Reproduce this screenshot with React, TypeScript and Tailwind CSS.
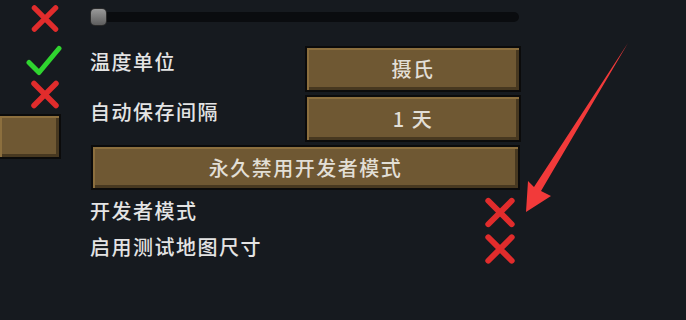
const font = { fontFamily: '"Noto Sans CJK SC", "Noto Sans", sans-serif' };

function RedX({ className = '' }: { className?: string }) {
  return (
    <svg viewBox="0 0 30 28" className={className} fill="none">
      <path d="M4 3 L26 25 M26 3 L4 25" stroke="#e12c2c" strokeWidth="5.5" strokeLinecap="round" />
    </svg>
  );
}

function Check({ className = '' }: { className?: string }) {
  return (
    <svg viewBox="0 0 36 30" className={className} fill="none">
      <path d="M3 17 L13 27 L33 3" stroke="#2fd42f" strokeWidth="5" strokeLinecap="round" strokeLinejoin="round" />
    </svg>
  );
}

function WoodButton({ label, className = '' }: { label?: string; className?: string }) {
  return (
    <div
      className={`flex items-center justify-center border-2 border-[#0b0b0b] bg-[#6f5833] text-[20px] font-medium tracking-[1.5px] text-[#e2dfd6] shadow-[inset_2px_2px_0_#8c6f3e,inset_-3px_-3px_0_#473820] ${className}`}
    >
      {label}
    </div>
  );
}

export default function App() {
  return (
    <div className="relative flex h-[320px] w-[686px] overflow-hidden bg-[#161a1f]" style={font}>
      <div className="flex w-[61px] flex-col pt-[5px]">
        <RedX className="ml-[30px] h-[27px] w-[30px]" />
        <Check className="ml-[26px] mt-[13px] h-[31px] w-[36px]" />
        <RedX className="ml-[30px] mt-[4px] h-[29px] w-[30px]" />
        <WoodButton className="mt-[5px] h-[45px] w-[61px] border-l-0" />
      </div>

      <div className="ml-[29px] flex w-[431px] flex-col pt-[8px]">
        <div className="relative h-[18px]">
          <div className="absolute left-[10px] right-[2px] top-[4px] h-[10px] rounded-full bg-[#0a0c0f]" />
          <div className="absolute left-[1px] top-[1px] h-[16px] w-[15px] rounded-[4px] bg-gradient-to-b from-[#9a9a9a] to-[#5e5e5e] shadow-[0_0_0_1px_#2a2a2a]" />
        </div>

        <div className="mt-[20px] flex h-[46px] items-start justify-between">
          <span className="pt-[4px] text-[20px] font-medium leading-[24px] tracking-[1.5px] text-[#e4e4e4]">温度单位</span>
          <WoodButton label="摄氏" className="h-[46px] w-[216px]" />
        </div>

        <div className="mt-[3px] flex h-[47px] items-start justify-between">
          <span className="pt-[5px] text-[20px] font-medium leading-[24px] tracking-[1.5px] text-[#e4e4e4]">自动保存间隔</span>
          <WoodButton label="1 天" className="h-[47px] w-[216px]" />
        </div>

        <WoodButton label="永久禁用开发者模式" className="mt-[3px] ml-[1px] h-[45px] w-[429px]" />

        <div className="mt-[7px] flex h-[31px] items-center justify-between">
          <span className="-mt-[4px] text-[20px] font-medium leading-[24px] tracking-[1.5px] text-[#e4e4e4]">开发者模式</span>
          <RedX className="mr-[5px] h-[31px] w-[32px]" />
        </div>

        <div className="mt-[5px] flex h-[32px] items-center justify-between">
          <span className="-mt-[5px] text-[20px] font-medium leading-[24px] tracking-[1.5px] text-[#e4e4e4]">启用测试地图尺寸</span>
          <RedX className="mr-[5px] h-[32px] w-[32px]" />
        </div>
      </div>

      <svg className="pointer-events-none absolute left-0 top-0" width="686" height="320" viewBox="0 0 686 320">
        <polygon points="628,43 541,191 551,196 526,212 528,181 534,187" fill="#f23a3a" />
      </svg>
    </div>
  );
}
